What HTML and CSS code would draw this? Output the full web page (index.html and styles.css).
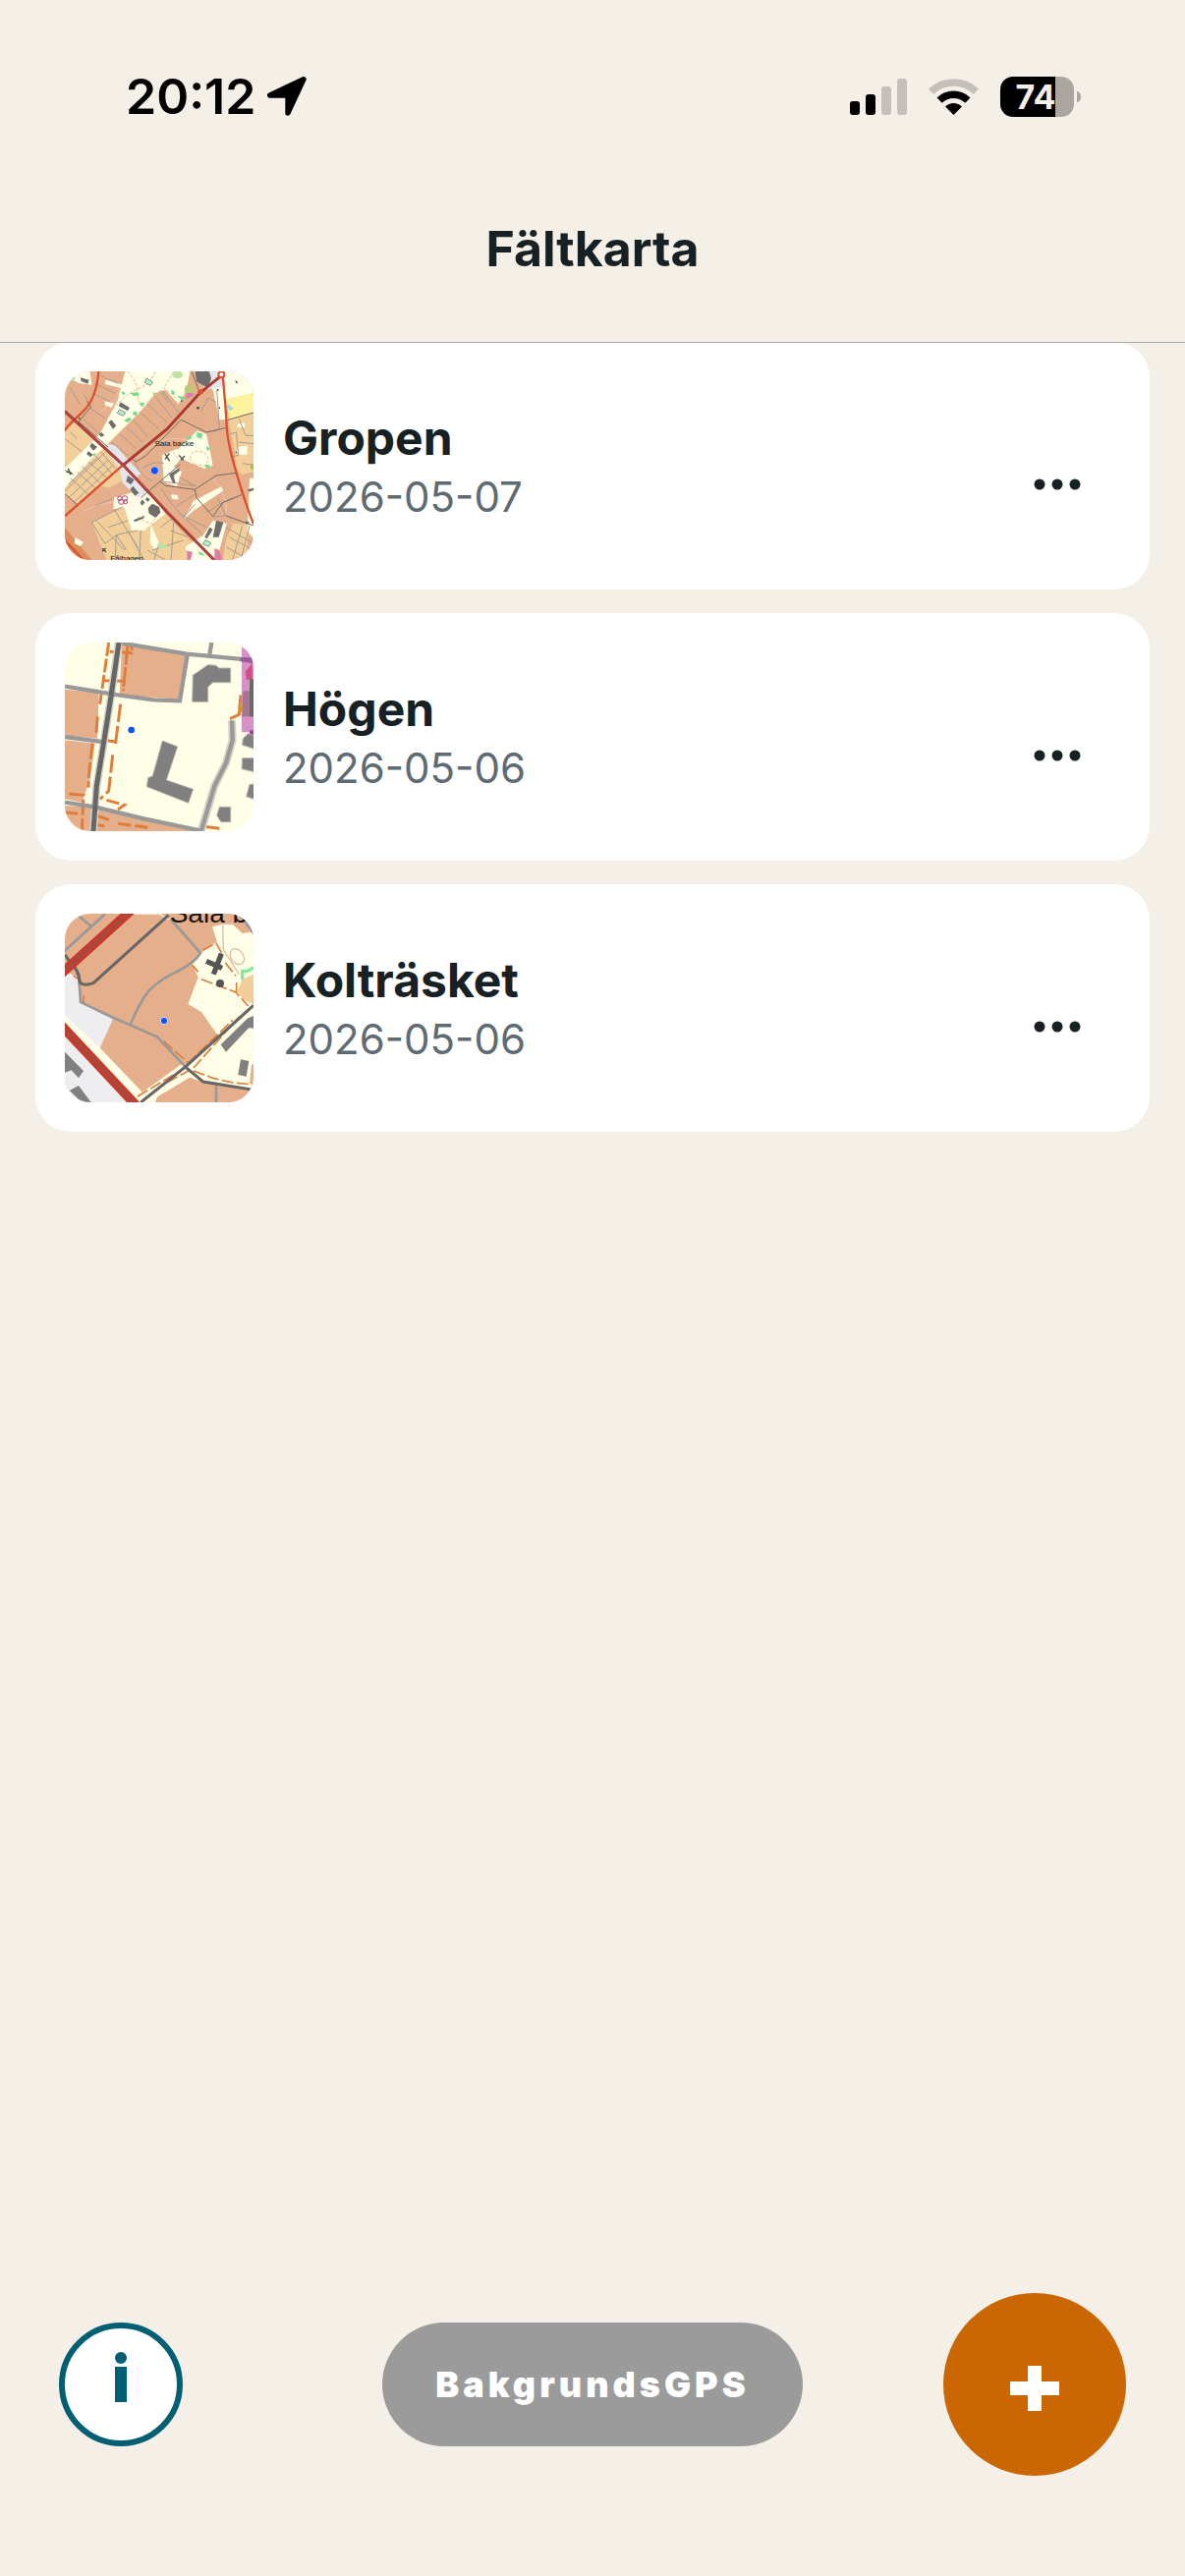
FILE: index.html
```html
<!DOCTYPE html>
<html lang="sv">
<head>
    <meta charset="UTF-8">
    <meta name="viewport" content="width=device-width, initial-scale=1.0">
    <title>Fältkarta</title>
    <link rel="stylesheet" href="styles.css">
</head>
<body>
    <header class="app-header">
        <div class="status-bar">
            <div class="status-left">
                <span class="clock">20:12</span>
                <svg class="location" viewBox="516 87 118 118" aria-hidden="true">
                    <path d="M625 95L524 143H578V196Z" stroke="#000" stroke-width="16" stroke-linejoin="round"/>
                </svg>
            </div>
            <div class="status-right">
                <svg class="signal" viewBox="0 0 58 37" aria-hidden="true">
                    <rect x="0" y="23" width="10" height="14" rx="3"/>
                    <rect x="16" y="16" width="10" height="21" rx="3"/>
                    <rect x="32" y="8" width="10" height="29" rx="3" fill="#c4c0b9"/>
                    <rect x="48" y="0" width="10" height="37" rx="3" fill="#c4c0b9"/>
                </svg>
                <svg class="wifi" viewBox="0 0 51 37" aria-hidden="true">
                    <path d="M2.6 13.3A33 33 0 0 1 48.4 13.3" fill="none" stroke="#c4c0b9" stroke-width="7.5"/>
                    <path d="M11.1 22.1A20.7 20.7 0 0 1 39.9 22.1" fill="none" stroke="#000" stroke-width="7.5"/>
                    <path d="M25.5 37L17 28.6A12 12 0 0 1 34 28.6Z"/>
                </svg>
                <svg class="battery" viewBox="0 0 82 41" aria-hidden="true">
                    <path d="M56 0H62A13 13 0 0 1 75 13V28A13 13 0 0 1 62 41H56Z" fill="#aba7a0"/>
                    <path d="M13 0H56V41H13A13 13 0 0 1 0 28V13A13 13 0 0 1 13 0Z"/>
                    <path d="M78 14.500Q82 16 82 20.500T78 26.500Z" fill="#aba7a0"/>
                    <text class="battery-level" x="36" y="33" text-anchor="middle">74</text>
                </svg>
            </div>
        </div>
        <h1 class="app-title">Fältkarta</h1>
    </header>

    <main class="map-list">
        <article class="map-card">
            <svg class="thumb" viewBox="108 114 576 576" aria-hidden="true">
                <rect x="108" y="114" width="576" height="576" fill="#e5af8b"/>
                <!-- lighter blocks -->
                <g fill="#f2cf99">
                    <path d="M108 298L140 268L222 332L262 372L285 400L145 520L108 488Z"/>
                    <path d="M285 405L300 440L240 470L205 458Z"/>
                    <path d="M190 575L262 537L300 530L310 600L368 590L415 550L500 640L540 690H165L235 690Z"/>
                    <path d="M608 260L684 240V420L650 430L636 418Z"/>
                    <path d="M622 578L672 582L660 690H590L600 630Z"/>
                </g>
                <path d="M108 590L190 690H108Z" fill="#dd8d5c"/>
                <!-- open ground -->
                <g fill="#ffffe8">
                    <path d="M122 114H185L190 155L150 150L122 135Z"/>
                    <path d="M292 114H490L480 170L455 214L415 170L385 180L340 235L250 325L190 380L108 470V410L215 305L270 200Z"/>
                    <path d="M232 140L285 155L280 165L230 153Z"/>
                    <path d="M230 205L258 212L250 225L230 217Z"/>
                    <path d="M555 150L590 114H684V180L600 200L605 260L580 262Z"/>
                    <path d="M512 295L540 305L560 400L535 412L495 395L460 378L445 360Z"/>
                    <path d="M405 370L450 350L470 375L440 405L465 420L450 465L410 452Z"/>
                    <path d="M258 500L325 480L365 480L415 550L350 600L312 600L290 530L256 535Z"/>
                    <path d="M432 490L452 492L455 505L435 505Z"/>
                    <path d="M500 510L585 466L592 478L500 540L470 568Z"/>
                    <path d="M560 570L602 578L572 690H490L475 650L530 615Z"/>
                    <path d="M370 580L396 640L420 655L380 655L368 640Z"/>
                    <path d="M672 440H684V625L665 600Z"/>
                    <path d="M636 272H658L656 286L634 284Z"/>
                    <path d="M635 346L665 340V368L635 368Z"/>
                    <path d="M140 622L165 635L155 648L137 640Z"/>
                </g>
                <path d="M600 200L684 180V240L610 260Z" fill="#fff29c"/>
                <path d="M235 335L262 340L315 400L340 425L325 440L355 485L330 500L285 455L275 410L230 350Z" fill="#e6e5ec"/>
                <path d="M540 114H600V155L575 165L530 170Z" fill="#e6e5ec"/>
                <!-- contour hints and foot paths -->
                <g fill="none" stroke="#f1d5bc" stroke-width="2">
                    <path d="M200 122Q250 130 270 160T210 240"/>
                    <path d="M165 540Q250 500 300 520"/>
                    <path d="M330 380Q370 330 430 320T530 360"/>
                    <path d="M560 440Q610 500 600 560"/>
                </g>
                <g fill="none" stroke="#e8a477" stroke-width="2.500" stroke-dasharray="9 5">
                    <path d="M300 115Q330 145 330 180T345 220"/>
                    <path d="M385 115L365 150L300 185L240 240"/>
                    <path d="M440 115L410 165L455 200"/>
                    <path d="M470 225L535 275L520 300"/>
                    <path d="M430 350L470 400L530 400"/>
                    <path d="M490 380Q495 350 525 360T540 395T510 405Z"/>
                    <path d="M200 490L225 510"/>
                    <path d="M440 500L420 540"/>
                    <path d="M330 560L370 580L395 550"/>
                    <path d="M480 440L500 480L490 540"/>
                </g>
                <!-- side streets -->
                <g fill="none" stroke="#a59a91" stroke-width="3">
                    <path d="M215 125L270 150M200 150L260 180M190 180L245 205M185 225L232 258M165 185L180 205M122 160L155 215M165 260L215 305"/>
                    <path d="M405 172L455 240M385 192L435 255M362 215L420 270M340 240L395 290M318 262L362 315M298 285L345 330M275 305L325 350M250 330L300 370"/>
                    <path d="M397 172L424 210"/>
                    <path d="M108 320L160 360M125 300L145 320M125 440L180 490M145 420L200 470M162 405L215 455M180 390L235 438M200 370L250 425M218 360L262 410"/>
                    <path d="M120 500L240 385M108 480L230 362M118 460L205 380M135 515L255 400"/>
                    <path d="M108 415L135 430M200 525L252 503M190 575L285 527M258 535L330 650M190 575L230 640M205 570L290 660M330 600L270 612L230 640M265 612L262 690M295 660L265 612M300 570L240 590"/>
                    <path d="M400 590L440 560M440 575L432 690M470 630L375 660M485 620L430 600M395 640L380 690M340 600L335 690M360 660L415 690M300 600L350 690"/>
                    <path d="M320 385Q335 430 375 450M345 410Q380 385 410 395M405 450Q450 455 510 465M458 438L510 465M400 470L440 525L470 560L525 608M365 480L430 560M505 490L450 525M505 520L470 560M460 550L540 590"/>
                    <path d="M545 195L570 208M545 195L525 235M572 170L580 290L560 300"/>
                    <path d="M612 305L632 300L638 370L615 375M640 260L660 310L684 310M640 330L684 335M650 395L684 400"/>
                    <path d="M600 590L684 640M610 620L675 655M600 650L655 680M650 585L620 690M672 585L645 690"/>
                    <path d="M575 500L600 555L560 558M620 500L590 515L540 545"/>
                </g>
                <g fill="none" stroke="#6f6b68" stroke-width="3">
                    <path d="M175 205L188 222L150 268L240 345"/>
                    <path d="M315 380L325 390L355 372L463 262L540 300L606 285"/>
                    <path d="M400 452L415 463L505 475L570 432L634 424M505 475L510 500L560 557L590 515L650 490"/>
                    <path d="M340 500L460 398"/>
                    <path d="M606 262L684 240M108 488L145 520"/>
                    <path d="M600 555L684 585"/>
                    <path d="M495 114L520 180"/>
                </g>
                <!-- green areas -->
                <g fill="#70df8c">
                    <path d="M280 174L293 180L289 188L283 182ZM308 180L332 178L334 188L318 190ZM338 210L352 209L348 221L338 219Z"/>
                    <path d="M316 236L330 238L326 249L316 247ZM288 264L304 254L312 260L300 270ZM376 178L385 180L379 187Z"/>
                    <path d="M432 170L444 176L441 187L434 182ZM450 188L472 192L470 204L458 196Z"/>
                    <path d="M510 300L528 304L526 320L512 316ZM480 314L494 310V320L484 324ZM540 342L552 350L542 358ZM536 398L550 400L548 410L538 408Z"/>
                    <path d="M128 136L140 130L136 141ZM190 368L204 362L198 372ZM484 668L494 670L490 680ZM514 664L528 668L536 677L520 674Z"/>
                </g>
                <g fill="#b9e3a0">
                    <ellipse cx="452" cy="124" rx="16" ry="11"/>
                    <ellipse cx="488" cy="170" rx="15" ry="17" fill="#bcc878"/>
                    <path d="M390 650L400 635L425 650L415 658Z"/>
                    <ellipse cx="680" cy="406" rx="5" ry="9" fill="#a9bf3e"/>
                </g>
                <g fill="#b8f0cd" stroke="#7d9383" stroke-width="3">
                    <path d="M358 135L376 147L369 157L351 147Z"/>
                    <path d="M275 230L293 240L286 250L268 241Z"/>
                    <path d="M537 629L554 638L547 649L530 641Z"/>
                </g>
                <!-- pink grounds -->
                <g fill="#dc7fa6">
                    <path d="M480 180H500V190L478 198Z"/>
                    <path d="M565 655L580 660L588 690H565Z"/>
                    <path d="M480 662L498 665L492 690H482Z"/>
                </g>
                <g fill="none" stroke="#bd3f86" stroke-width="3">
                    <circle cx="276" cy="502" r="7"/><circle cx="291" cy="502" r="8"/><circle cx="280" cy="512" r="8"/><circle cx="293" cy="512" r="6"/>
                </g>
                <path d="M602 221L608 216L620 228L614 233Z" fill="#a6ddf6" stroke="#6bbce0" stroke-width="2"/>
                <!-- buildings -->
                <g fill="#6e6e6e">
                    <path d="M506 114H548L555 135L545 165L510 145Z"/>
                    <path d="M155 133L182 140L178 152L158 144Z"/>
                    <path d="M278 208L306 225L300 235L272 220Z"/>
                    <path d="M250 262L265 280L255 290L241 270Z"/>
                    <path d="M220 300L229 310L218 314L212 306Z"/>
                    <path d="M190 332L207 345L195 356L184 343Z"/>
                    <path d="M180 358L194 368L186 376L174 366Z"/>
                    <path d="M300 432L320 445L310 460L295 450Z"/>
                    <path d="M316 464L334 485L322 494L307 475Z"/>
                    <path d="M375 518L396 528L400 545L385 560L365 548L362 532Z"/>
                    <path d="M345 505L352 515L344 524L338 515ZM358 498L368 505L362 512L354 506Z"/>
                    <path d="M318 568L350 555V562L322 574Z"/>
                    <path d="M426 428L455 410L460 416L440 432L446 455H438Z"/>
                    <path d="M570 570L592 575L578 620H560Z"/>
                    <path d="M550 590L560 596L542 625L535 620Z"/>
                    <path d="M660 572H670V580H660Z"/>
                    <path d="M666 475L684 470V477L670 482Z"/>
                </g>
                <g fill="none" stroke="#4d4b4a" stroke-width="4">
                    <path d="M414 366L428 388M427 364L414 382M456 370L470 385M462 385L474 372"/>
                    <path d="M112 420L130 425M118 410L126 430M222 655L234 666M233 654L222 664"/>
                    <path d="M511 223L518 229M518 223L511 229M629 143L635 150M575 168V173M580 223V228M465 202V207M631 359V364M150 255L154 260"/>
                </g>
                <!-- main roads -->
                <g fill="none" stroke="#dc5030" stroke-width="7">
                    <path d="M211 114Q205 200 158 242T108 296"/>
                    <path d="M285 400L108 556"/>
                    <path d="M590 130Q600 230 602 280T632 425T684 580"/>
                    <path d="M108 630L165 690"/>
                </g>
                <g fill="none" stroke="#a83b35" stroke-width="9">
                    <path d="M108 236L286 400L425 548L564 690"/>
                    <path d="M286 400L420 290L520 180L582 130"/>
                </g>
                <path d="M108 236L286 400L564 690" fill="none" stroke="#c65a4c" stroke-width="2"/>
                <circle cx="586" cy="124" r="9" fill="#fff" stroke="#dc5030" stroke-width="6"/>
                <circle cx="522" cy="177" r="8" fill="#dc5030"/>
                <text class="place" x="442" y="341" text-anchor="middle">Sala backe</text>
                <text class="place" x="297" y="692" text-anchor="middle">Fålhagen</text>
                <circle cx="382" cy="417" r="12" fill="#0a53ff" stroke="#dcdcf4" stroke-width="2"/>
            </svg>
            <div class="map-info">
                <h2 class="map-name">Gropen</h2>
                <time class="map-date" datetime="2026-05-07">2026-05-07</time>
            </div>
            <button class="more" type="button" aria-label="Fler val för Gropen">
                <svg viewBox="0 0 48 12" aria-hidden="true"><circle cx="6" cy="6" r="5.500"/><circle cx="24" cy="6" r="5.500"/><circle cx="42" cy="6" r="5.500"/></svg>
            </button>
        </article>

        <article class="map-card">
            <svg class="thumb" viewBox="108 102 576 576" aria-hidden="true">
                <rect x="108" y="102" width="576" height="576" fill="#ffffe8"/>
                <g fill="#e5af8b">
                    <path d="M282 102L478 135L458 275L275 262Z"/>
                    <path d="M108 245L212 255L207 395L108 385Z"/>
                    <path d="M108 400L200 410L185 520L160 590L108 580Z"/>
                    <path d="M108 600L200 605L350 640L520 678H108Z"/>
                </g>
                <!-- foot paths -->
                <g fill="none" stroke="#df7d3c" stroke-width="9">
                    <path d="M242 102L228 200L215 290" stroke-dasharray="42 8"/>
                    <path d="M300 110L294 170L286 250" stroke-dasharray="60 7"/>
                    <path d="M245 130L312 134V112M222 218L290 220" stroke-dasharray="30 8"/>
                    <path d="M278 290L262 415M208 328L204 378M254 445L242 555L215 580" stroke-dasharray="55 12"/>
                    <path d="M192 410L182 500L180 545M120 564L165 568L160 678" stroke-dasharray="48 10"/>
                    <path d="M235 583L290 598L270 612M108 620L150 625M205 630L245 645M190 655L235 664M270 655L370 668" stroke-dasharray="40 12"/>
                    <path d="M228 400L262 405M530 664L580 670M612 335L640 322L645 262"/>
                </g>
                <!-- railway bridge area -->
                <path d="M648 110H684V376H648Z" fill="#d692c6"/>
                <path d="M672 370H684V396H672Z" fill="#a63b9b"/>
                <path d="M660 190L680 165V215H662Z" fill="#cf4d82"/>
                <path d="M652 250H672V328H648Z" fill="#a77494"/>
                <path d="M638 292H650V316H638Z" fill="#c59a2e"/>
                <path d="M672 214H684V328H672Z" fill="#6e6a63"/>
                <!-- streets -->
                <g fill="none" stroke="#d2d2ca" stroke-width="24">
                    <path d="M272 102L250 260L228 400L205 540L195 678"/>
                    <path d="M618 340L620 400L600 470L565 540L524 678"/>
                </g>
                <g fill="none" stroke="#999" stroke-width="13">
                    <path d="M282 104L480 137L684 156"/>
                    <path d="M556 102L550 138"/>
                    <path d="M482 140L459 280L380 277L270 262L108 236"/>
                    <path d="M108 390L230 406"/>
                    <path d="M108 590L200 604L350 640L520 676"/>
                    <path d="M618 340L620 400L600 470L565 540L524 678"/>
                </g>
                <path d="M644 148H684V166L644 160Z" fill="#995b9c"/>
                <path d="M273 102L250 260L228 400L205 540L195 678" fill="none" stroke="#666" stroke-width="15"/>
                <!-- buildings -->
                <g fill="#808080" stroke="#b4b4ac" stroke-width="3">
                    <path d="M499 202L545 170L570 172L578 180H614V224H560L545 238V283H497Z"/>
                    <path d="M406 402L452 420L418 522L500 550L485 592L358 542L362 515L376 510Z"/>
                    <path d="M580 604H614V650H585L572 630Z"/>
                    <path d="M652 395L668 380L690 388V428L650 415Z"/>
                    <path d="M650 455H690V498L648 488Z"/>
                    <path d="M672 535H690V582L662 572Z"/>
                </g>
                <circle cx="311" cy="369" r="10" fill="#0a53ff"/>
            </svg>
            <div class="map-info">
                <h2 class="map-name">Högen</h2>
                <time class="map-date" datetime="2026-05-06">2026-05-06</time>
            </div>
            <button class="more" type="button" aria-label="Fler val för Högen">
                <svg viewBox="0 0 48 12" aria-hidden="true"><circle cx="6" cy="6" r="5.500"/><circle cx="24" cy="6" r="5.500"/><circle cx="42" cy="6" r="5.500"/></svg>
            </button>
        </article>

        <article class="map-card">
            <svg class="thumb" viewBox="108 90 576 576" aria-hidden="true">
                <rect x="108" y="90" width="576" height="576" fill="#e5af8b"/>
                <!-- grey and open ground -->
                <path d="M108 265L148 285L155 360L255 412L215 500L300 590L340 666H108Z" fill="#eeeef0"/>
                <path d="M108 400L215 500L345 635L470 545L530 605L490 590L390 650L385 666H320L108 450Z" fill="#ffffe8"/>
                <path d="M558 130L590 122L620 122L650 150L684 145V666L684 635L530 605L475 555L575 462L525 390L484 366L515 285L497 245L530 205L572 175Z" fill="#ffffe8"/>
                <path d="M650 290L684 275V368L650 350L635 325Z" fill="#f2cf99"/>
                <path d="M530 605L684 632V666H385L390 650L490 590Z" fill="#e5af8b"/>
                <path d="M678 550H684V610H672Z" fill="#e5af8b"/>
                <path d="M300 90L395 90L425 108" fill="none" stroke="#f6e6c8" stroke-width="6"/>
                <g fill="none" stroke="#e0bea4" stroke-width="4">
                    <path d="M590 125L592 200L640 275"/>
                    <ellipse cx="634" cy="221" rx="19" ry="26" transform="rotate(-35 634 221)"/>
                </g>
                <!-- foot paths -->
                <g fill="none" stroke="#df7d3c" stroke-width="5" stroke-dasharray="36 10">
                    <path d="M528 202L570 180L588 212M598 240L630 280M525 290L630 330L668 372M632 300V330M497 247L515 268"/>
                    <path d="M330 648L460 570L620 415M420 605L500 562L640 405M410 480L485 545"/>
                    <path d="M500 570L560 592L620 606L684 612M165 340V365M134 280L150 290"/>
                </g>
                <!-- streets -->
                <g fill="none" stroke="#999" stroke-width="8">
                    <path d="M108 203L232 90M150 96L188 128"/>
                    <path d="M432 108L522 210Q505 240 440 272T350 345T308 428"/>
                    <path d="M150 270L156 360L250 405L390 466L478 560"/>
                    <path d="M570 615V666M640 90L684 150"/>
                </g>
                <g fill="none" stroke="#666" stroke-width="9">
                    <path d="M108 215L125 240Q150 260 154 300Q165 312 195 302L425 94"/>
                    <path d="M340 666L478 556L684 370"/>
                    <path d="M478 560L530 603L684 628"/>
                </g>
                <!-- main roads -->
                <g fill="none" stroke="#c53b2c" stroke-width="29">
                    <path d="M98 272L310 80"/>
                    <path d="M98 432L330 680"/>
                </g>
                <g fill="none" stroke="#96524a" stroke-width="6">
                    <path d="M98 272L310 80"/>
                    <path d="M98 432L330 680"/>
                </g>
                <!-- buildings -->
                <g fill="#808080">
                    <path d="M584 490L665 410L684 402V440L670 438L600 512Z"/>
                    <path d="M645 535L670 540L662 587L637 582Z"/>
                    <path d="M108 512L165 570L150 592L128 568L108 575Z"/>
                    <path d="M122 630L150 615L188 666H160Z"/>
                </g>
                <path d="M586 212L562 275M540 235L588 256" fill="none" stroke="#555" stroke-width="16"/>
                <circle cx="582" cy="303" r="12" fill="#555"/>
                <path d="M650 292V266H665L684 254" fill="none" stroke="#84ea98" stroke-width="10"/>
                <text class="place place-large" x="428" y="118">Sala b</text>
                <circle cx="411" cy="417" r="11" fill="#0a53ff" stroke="#dcdcf4" stroke-width="3"/>
            </svg>
            <div class="map-info">
                <h2 class="map-name">Kolträsket</h2>
                <time class="map-date" datetime="2026-05-06">2026-05-06</time>
            </div>
            <button class="more" type="button" aria-label="Fler val för Kolträsket">
                <svg viewBox="0 0 48 12" aria-hidden="true"><circle cx="6" cy="6" r="5.500"/><circle cx="24" cy="6" r="5.500"/><circle cx="42" cy="6" r="5.500"/></svg>
            </button>
        </article>
    </main>

    <footer class="toolbar">
        <button class="info-button" type="button" aria-label="Information">
            <svg viewBox="0 0 12 51" aria-hidden="true"><circle cx="6" cy="6" r="6"/><rect y="15" width="12" height="36"/></svg>
        </button>
        <button class="gps-button" type="button">BakgrundsGPS</button>
        <button class="add-button" type="button" aria-label="Ny karta">
            <svg viewBox="0 0 50 46" aria-hidden="true"><path d="M18 0H32V16H50V30H32V46H18V30H0V16H18Z"/></svg>
        </button>
    </footer>
</body>
</html>
```
FILE: styles.css
```css
* {
    box-sizing: border-box;
}
body {
    display: flex;
    flex-direction: column;
    min-height: 100vh;
    margin: 0;
    background-color: #f4efe7;
    font-family: Inter, "Liberation Sans", sans-serif;
    color: #172123;
}
h1, h2 {
    margin: 0;
    font-weight: 700;
}
button {
    padding: 0;
    border: none;
    font-family: inherit;
    cursor: pointer;
}
svg {
    display: block;
}

/* Header */
.app-header {
    position: relative;
    border-bottom: 1px solid #aaa9a5;
}
.status-bar {
    display: flex;
    justify-content: space-between;
    align-items: center;
    padding: 72px 106px 0 128px;
    color: #000;
}
.status-left {
    display: flex;
    align-items: center;
    gap: 12px;
}
.status-right {
    display: flex;
    align-items: center;
    gap: 22px;
}
.clock {
    font-size: 50px;
    line-height: 52px;
    font-weight: 600;
}
.location {
    width: 40px;
    height: 40px;
}
.signal {
    width: 58px;
    height: 37px;
}
.wifi {
    width: 51px;
    height: 37px;
}
.battery {
    width: 82px;
    height: 41px;
}
.battery-level {
    fill: #f4efe7;
    font-size: 34px;
    font-weight: 700;
}
.app-title {
    padding: 99px 36px 65px;
    font-size: 50px;
    line-height: 60px;
    text-align: center;
}

/* Map list */
.map-list {
    flex: 1;
    display: flex;
    flex-direction: column;
    gap: 24px;
    margin-top: -1px;
    padding: 0 36px;
}
.map-card {
    display: flex;
    align-items: center;
    gap: 30px;
    padding: 30px;
    background-color: #fff;
    border-radius: 36px;
}
.thumb {
    flex: none;
    width: 192px;
    height: 192px;
    border-radius: 26px;
}
.place {
    font-family: "Liberation Sans", Arial, sans-serif;
    font-size: 24px;
    fill: #111;
}
.place-large {
    font-size: 84px;
}
.map-info {
    flex: 1;
    padding-top: 4px;
}
.map-name {
    font-size: 48px;
    line-height: 60px;
}
.map-date {
    display: block;
    font-size: 42px;
    line-height: 60px;
    color: #5f6b73;
}
.more {
    align-self: flex-end;
    display: flex;
    justify-content: center;
    align-items: center;
    width: 128px;
    height: 154px;
    background: none;
}
.more svg {
    width: 48px;
    height: 12px;
    fill: #172123;
}

/* Bottom buttons */
.toolbar {
    display: grid;
    grid-template-columns: 1fr auto 1fr;
    align-items: center;
    padding: 0 60px 102px;
}
.info-button {
    display: flex;
    justify-content: center;
    width: 126px;
    height: 126px;
    padding-top: 24px;
    background-color: #fff;
    border: 6px solid #005f73;
    border-radius: 50%;
}
.info-button svg {
    width: 12px;
    height: 51px;
    fill: #005f73;
}
.gps-button {
    height: 126px;
    padding: 0 54px;
    background-color: #9b9b9b;
    border-radius: 63px;
    color: #fff;
    font-size: 36px;
    font-weight: 900;
    letter-spacing: 4px;
}
.add-button {
    justify-self: end;
    display: flex;
    justify-content: center;
    align-items: center;
    width: 186px;
    height: 186px;
    padding-top: 8px;
    background-color: #ca6702;
    border-radius: 50%;
}
.add-button svg {
    width: 50px;
    height: 46px;
    fill: #fff;
}
```
